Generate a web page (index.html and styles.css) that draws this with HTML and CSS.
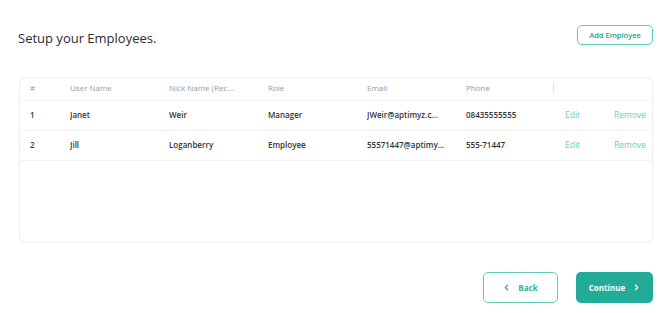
FILE: index.html
```html
<!DOCTYPE html>
<html lang="en">
<head>
    <meta charset="UTF-8">
    <meta name="viewport" content="width=device-width, initial-scale=1.0">
    <title>Setup your Employees</title>
    <link rel="stylesheet" href="styles.css">
</head>
<body>
    <div class="page">
        <!-- Heading bar -->
        <div class="top-bar">
            <h1 class="title">Setup your Employees.</h1>
            <button type="button" class="add-btn">Add Employee</button>
        </div>

        <!-- Employee table -->
        <div class="card">
            <table class="emp-table">
                <colgroup>
                    <col class="col-num">
                    <col class="col-wide">
                    <col class="col-wide">
                    <col class="col-wide">
                    <col class="col-wide">
                    <col class="col-wide">
                    <col class="col-edit">
                    <col>
                </colgroup>
                <thead>
                    <tr>
                        <th>#</th>
                        <th><span class="cut">User Name</span></th>
                        <th><span class="cut">Nick Name (Rec...</span></th>
                        <th><span class="cut">Role</span></th>
                        <th><span class="cut">Email</span></th>
                        <th><span class="cut">Phone</span></th>
                        <th colspan="2"><span class="divider"></span></th>
                    </tr>
                </thead>
                <tbody>
                    <tr>
                        <td>1</td>
                        <td><span class="cut">Janet</span></td>
                        <td><span class="cut">Weir</span></td>
                        <td><span class="cut">Manager</span></td>
                        <td><span class="cut">JWeir@aptimyz.c...</span></td>
                        <td><span class="cut">08435555555</span></td>
                        <td><a href="#" class="link">Edit</a></td>
                        <td><a href="#" class="link">Remove</a></td>
                    </tr>
                    <tr>
                        <td>2</td>
                        <td><span class="cut">Jill</span></td>
                        <td><span class="cut">Loganberry</span></td>
                        <td><span class="cut">Employee</span></td>
                        <td><span class="cut">55571447@aptimy...</span></td>
                        <td><span class="cut">555-71447</span></td>
                        <td><a href="#" class="link">Edit</a></td>
                        <td><a href="#" class="link">Remove</a></td>
                    </tr>
                </tbody>
            </table>
        </div>

        <!-- Footer navigation -->
        <div class="nav-bar">
            <button type="button" class="btn btn-back">
                <svg class="chev" viewBox="0 0 8 8" width="7" height="7"><path d="M5.2 1.4 L2.6 4 L5.2 6.6" fill="none" stroke="currentColor" stroke-width="1.5" stroke-linecap="round" stroke-linejoin="round"/></svg>
                Back
            </button>
            <button type="button" class="btn btn-next">
                Continue
                <svg class="chev" viewBox="0 0 8 8" width="7" height="7"><path d="M2.8 1.4 L5.4 4 L2.8 6.6" fill="none" stroke="currentColor" stroke-width="1.5" stroke-linecap="round" stroke-linejoin="round"/></svg>
            </button>
        </div>
    </div>
</body>
</html>
```

FILE: styles.css
```css
/* Page */
body {
    margin: 0;
    font-family: 'Open Sans', 'Liberation Sans', sans-serif;
    background: #fff;
    color: #333;
}

.page {
    padding: 25px 17px 0 18px;
}

/* Heading bar */
.top-bar {
    display: flex;
    justify-content: space-between;
    align-items: flex-start;
}

.title {
    margin: 3px 0 0;
    font-size: 13px;
    line-height: 20px;
    font-weight: 400;
    color: #2b2b2b;
}

.add-btn {
    width: 76px;
    height: 20px;
    padding: 0;
    border: 1.5px solid #62cbb8;
    border-radius: 5px;
    background: #fff;
    color: #22a38d;
    font-family: inherit;
    font-size: 7.5px;
    font-weight: 600;
    cursor: pointer;
}

/* Table card */
.card {
    margin: 29px 0 0 1px;
    height: 164px;
    border: 1px solid #eee;
    border-radius: 6px;
    overflow: hidden;
}

.emp-table {
    width: 100%;
    border-collapse: collapse;
    table-layout: fixed;
    font-size: 8px;
}

.col-num { width: 50px; }
.col-wide { width: 99px; }
.col-edit { width: 49px; }

.emp-table th,
.emp-table td {
    text-align: left;
    padding: 0;
    white-space: nowrap;
}

.emp-table th:first-child,
.emp-table td:first-child {
    padding-left: 10px;
}

.emp-table th {
    height: 19px;
    padding-bottom: 3px;
    font-weight: 400;
    color: #999;
    border-bottom: 1px solid #f1f1f1;
}

.emp-table td {
    height: 27px;
    padding-bottom: 2px;
    font-weight: 600;
    color: #333;
    border-bottom: 1px solid #f1f1f1;
}

.cut {
    display: block;
    max-width: 80px;
    overflow: hidden;
}

.divider {
    display: block;
    width: 1px;
    height: 9px;
    margin-left: -12px;
    background: #ddd;
}

.link {
    color: #6acdbb;
    text-decoration: none;
    font-size: 8.5px;
    font-weight: 500;
}

/* Footer navigation */
.nav-bar {
    display: flex;
    justify-content: flex-end;
    gap: 18px;
    margin-top: 29px;
}

.btn {
    display: flex;
    align-items: center;
    justify-content: center;
    gap: 8px;
    height: 31px;
    border-radius: 5px;
    font-family: inherit;
    font-size: 8px;
    font-weight: 700;
    cursor: pointer;
}

.btn-back {
    width: 75px;
    border: 1.5px solid #62cbb8;
    background: #fff;
    color: #3aae9a;
}

.btn-next {
    width: 77px;
    border: none;
    background: #22ab96;
    color: #fff;
}
```
